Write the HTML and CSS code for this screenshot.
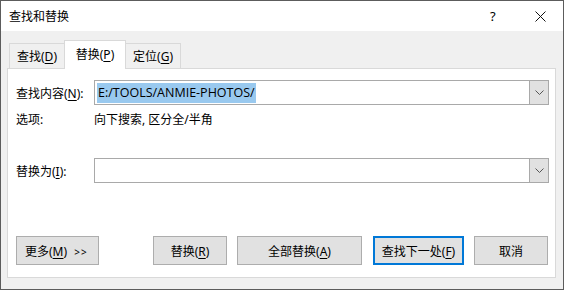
FILE: index.html
```html
<!DOCTYPE html>
<html lang="zh-CN">
<head>
  <meta charset="UTF-8" />
  <title>查找和替换</title>
  <link rel="stylesheet" href="styles.css">
</head>
<body>
  <div class="window">
    <div class="titlebar">
      <span class="title">查找和替换</span>
      <span class="help">?</span>
      <span class="close">
        <svg width="11" height="11" viewBox="0 0 11 11"><path d="M0.5 0.5L10.5 10.5M10.5 0.5L0.5 10.5" stroke="#111" stroke-width="1" fill="none"/></svg>
      </span>
    </div>

    <div class="tabs">
      <div class="tab">查找(<u>D</u>)</div>
      <div class="tab active">替换(<u>P</u>)</div>
      <div class="tab">定位(<u>G</u>)</div>
    </div>

    <div class="panel">
      <div class="row find-row">
        <label class="label">查找内容(<u>N</u>):</label>
        <div class="combo">
          <div class="combo-text"><span class="selected">E:/TOOLS/ANMIE-PHOTOS/</span></div>
          <div class="combo-btn">
            <svg width="9" height="5" viewBox="0 0 9 5"><path d="M0.5 0.5L4.5 4.5L8.5 0.5" stroke="#555" stroke-width="1" fill="none"/></svg>
          </div>
        </div>
      </div>
      <div class="row options-row">
        <span class="label">选项:</span>
        <span class="options">向下搜索, 区分全/半角</span>
      </div>
      <div class="row replace-row">
        <label class="label">替换为(<u>I</u>):</label>
        <div class="combo">
          <div class="combo-text"></div>
          <div class="combo-btn">
            <svg width="9" height="5" viewBox="0 0 9 5"><path d="M0.5 0.5L4.5 4.5L8.5 0.5" stroke="#555" stroke-width="1" fill="none"/></svg>
          </div>
        </div>
      </div>

      <div class="buttons">
        <button class="btn more">更多(<u>M</u>) <span class="arrows">&gt;&gt;</span></button>
        <button class="btn replace">替换(<u>R</u>)</button>
        <button class="btn replace-all">全部替换(<u>A</u>)</button>
        <button class="btn find-next">查找下一处(<u>F</u>)</button>
        <button class="btn cancel">取消</button>
      </div>
    </div>
  </div>
</body>
</html>
```

FILE: styles.css
```css
body {
  margin: 0;
  background: #fff;
  font-family: "Noto Sans", "Noto Sans CJK SC", sans-serif;
  font-size: 12px;
  color: #000;
}
u {
  text-decoration: underline;
  text-underline-offset: 2px;
}
.window {
  width: 562px;
  height: 288px;
  border: 1px solid #5c5c5c;
  background: #f0f0f0;
  display: flex;
  flex-direction: column;
}
.titlebar {
  height: 30px;
  background: #fff;
  display: flex;
  align-items: center;
  padding-left: 8px;
}
.title {
  flex: 1;
  font-size: 12px;
}
.help {
  width: 10px;
  font-size: 13px;
  margin-right: 35px;
}
.close {
  display: flex;
  margin-right: 17px;
}
.tabs {
  display: flex;
  align-items: flex-end;
  margin-left: 8px;
  margin-top: 9px;
  height: 28px;
}
.tab {
  height: 25px;
  box-sizing: border-box;
  border: 1px solid #d9d9d9;
  border-bottom: none;
  background: #f0f0f0;
  display: flex;
  align-items: center;
  justify-content: center;
  white-space: nowrap;
  width: 56px;
}
.tab.active {
  height: 29px;
  width: 62px;
  background: #fff;
  margin: 0 -1px -1px;
  position: relative;
  z-index: 1;
  padding-bottom: 2px;
}
.panel {
  margin: 0 7px 0 6px;
  height: 210px;
  box-sizing: border-box;
  background: #fff;
  border: 1px solid #d9d9d9;
  padding: 11px 6px 0 8px;
  display: flex;
  flex-direction: column;
}
.row {
  display: flex;
  align-items: center;
}
.label {
  width: 78px;
}
.combo {
  width: 455px;
  height: 25px;
  box-sizing: border-box;
  border: 1px solid #a9a9a9;
  display: flex;
}
.combo-text {
  flex: 1;
  padding: 2px 1px 2px 2px;
  display: flex;
  align-items: center;
}
.selected {
  background: #99c9ef;
  font-family: "Open Sans", "Noto Sans", sans-serif;
  font-size: 12.5px;
  line-height: 20px;
  padding: 0 1px;
}
.combo-btn {
  width: 18px;
  background: #e1e1e1;
  border-left: 1px solid #a9a9a9;
  display: flex;
  align-items: center;
  justify-content: center;
}
.options-row {
  margin-top: 5px;
  height: 18px;
}
.replace-row {
  margin-top: 30px;
}
.buttons {
  display: flex;
  margin-top: 53px;
}
.btn {
  height: 29px;
  box-sizing: border-box;
  background: #e1e1e1;
  border: 1px solid #adadad;
  font-family: inherit;
  font-size: 12px;
  padding: 0;
  color: #000;
}
.more {
  width: 83px;
  text-align: left;
  padding-left: 8px;
}
.arrows {
  font-size: 10px;
  margin-left: 4px;
  letter-spacing: 1px;
}
.replace {
  width: 74px;
  margin-left: 54px;
}
.replace-all {
  width: 125px;
  margin-left: 10px;
}
.find-next {
  width: 91px;
  margin-left: 11px;
  border: 2px solid #0078d7;
}
.cancel {
  width: 74px;
  margin-left: 10px;
}
```
